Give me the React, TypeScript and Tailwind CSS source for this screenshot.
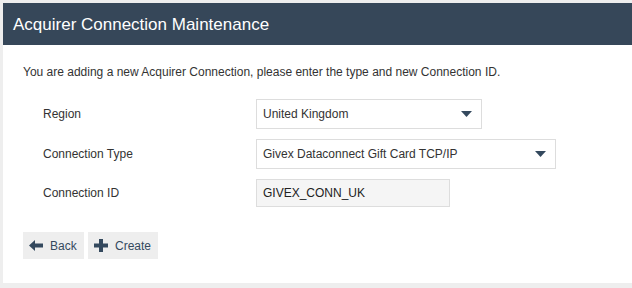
const Caret = () => (
  <svg width="11" height="6" viewBox="0 0 11 6" className="shrink-0">
    <path d="M0 0h11L5.5 6z" fill="#34495e" />
  </svg>
);

const rows = [
  { label: "Region", kind: "select", value: "United Kingdom", width: "w-[226px]" },
  { label: "Connection Type", kind: "select", value: "Givex Dataconnect Gift Card TCP/IP", width: "w-[300px]" },
  { label: "Connection ID", kind: "input", value: "GIVEX_CONN_UK", width: "w-[194px]" },
];

const App = () => {
  return (
    <div className="min-h-screen w-[632px] h-[288px] bg-[#eeeeee] pl-[3px] pt-[3px] pb-[5px] font-['Liberation_Sans',Arial,sans-serif]">
      <div className="bg-white h-full flex flex-col">
        <div className="bg-[#364759] h-[42px] flex items-center px-[10px]">
          <h1 className="text-white text-[17px] leading-none">Acquirer Connection Maintenance</h1>
        </div>
        <div className="px-5 pt-[20px]">
          <p className="text-[12px] text-[#333] leading-[15px]">
            You are adding a new Acquirer Connection, please enter the type and new Connection ID.
          </p>
          <div className="mt-[19px] flex flex-col gap-[10px]">
            {rows.map((row) => (
              <div key={row.label} className="flex items-center">
                <div className="w-[233px] pl-5 text-[12px] text-[#333]">{row.label}</div>
                {row.kind === "select" ? (
                  <div
                    className={`${row.width} h-[30px] border border-[#dddddd] bg-white flex items-center justify-between pl-[6px] pr-[9px] text-[12px] text-[#333]`}
                  >
                    <span>{row.value}</span>
                    <Caret />
                  </div>
                ) : (
                  <div
                    className={`${row.width} h-[28px] border border-[#dddddd] bg-[#f5f5f5] flex items-center pl-[6px] text-[12px] text-[#222]`}
                  >
                    {row.value}
                  </div>
                )}
              </div>
            ))}
          </div>
          <div className="mt-[25px] flex gap-1">
            <button className="h-[27px] w-[61px] bg-[#eeeeee] flex items-center pl-[6px] gap-[7px] text-[12px] text-[#34495e]">
              <svg width="14" height="11" viewBox="0 0 14 11">
                <path d="M0 5.5L6 0v3.5h8v4H6V11z" fill="#34495e" />
              </svg>
              Back
            </button>
            <button className="h-[27px] w-[70px] bg-[#eeeeee] flex items-center pl-[6px] gap-[7px] text-[12px] text-[#34495e]">
              <svg width="14" height="13" viewBox="0 0 14 13">
                <path d="M5 0h4v4.5h5v4H9V13H5V8.5H0v-4h5z" fill="#34495e" />
              </svg>
              Create
            </button>
          </div>
        </div>
      </div>
    </div>
  );
};

export default App;
